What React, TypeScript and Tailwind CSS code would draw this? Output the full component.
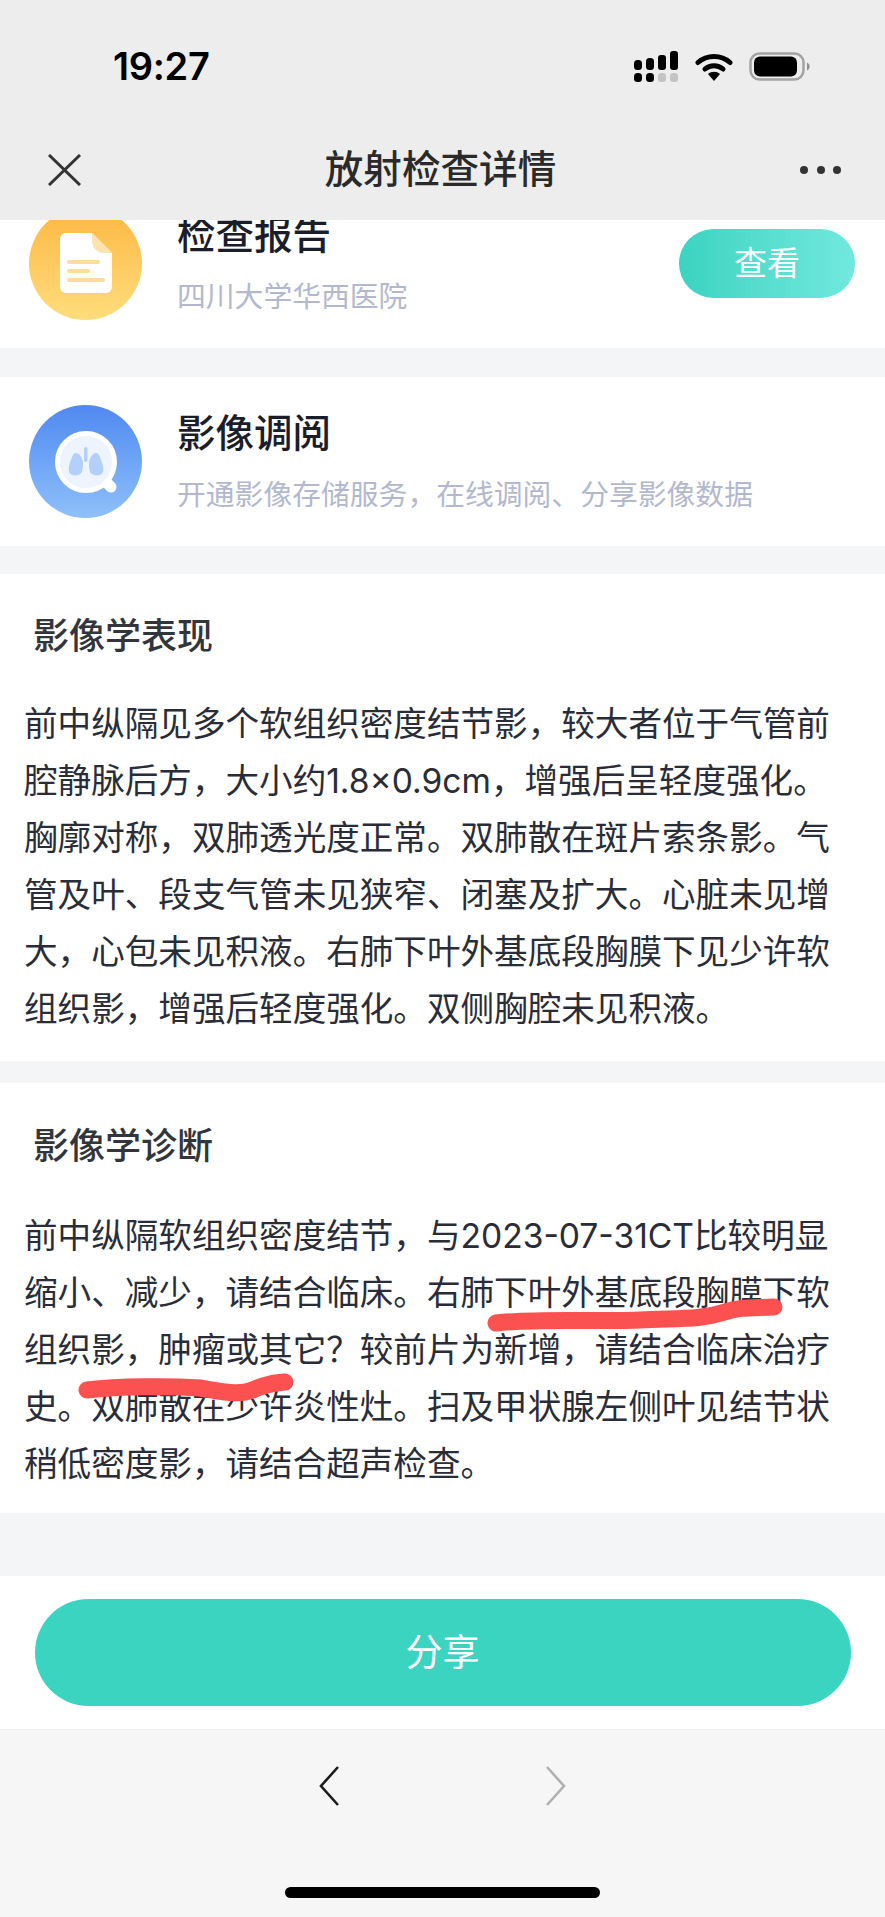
const findings = [
  '前中纵隔见多个软组织密度结节影，较大者位于气管前',
  '腔静脉后方，大小约1.8×0.9cm，增强后呈轻度强化。',
  '胸廓对称，双肺透光度正常。双肺散在斑片索条影。气',
  '管及叶、段支气管未见狭窄、闭塞及扩大。心脏未见增',
  '大，心包未见积液。右肺下叶外基底段胸膜下见少许软',
  '组织影，增强后轻度强化。双侧胸腔未见积液。',
];

const diagnosis = [
  '前中纵隔软组织密度结节，与2023-07-31CT比较明显',
  '缩小、减少，请结合临床。右肺下叶外基底段胸膜下软',
  '组织影，肿瘤或其它？较前片为新增，请结合临床治疗',
  '史。双肺散在少许炎性灶。扫及甲状腺左侧叶见结节状',
  '稍低密度影，请结合超声检查。',
];

function SignalIcon() {
  return (
    <svg width="46" height="31" viewBox="0 0 46 31">
      <rect x="1" y="22" width="8" height="9" rx="3.5" fill="#000" />
      <rect x="13" y="22" width="8" height="9" rx="3.5" fill="#000" />
      <rect x="25" y="22" width="8" height="9" rx="3" fill="#c4c4c4" />
      <rect x="37" y="22" width="8" height="9" rx="3" fill="#c4c4c4" />
      <rect x="1" y="9" width="8" height="10" rx="3.5" fill="#000" />
      <rect x="13" y="7" width="8" height="12" rx="3.5" fill="#000" />
      <rect x="25" y="4" width="8" height="15" rx="3" fill="#000" />
      <rect x="37" y="0" width="8" height="19" rx="3" fill="#000" />
    </svg>
  );
}

function WifiIcon() {
  return (
    <svg width="38" height="29" viewBox="0 0 38 29">
      <path d="M3 10.5 C 12 2.5, 26 2.5, 35 10.5" fill="none" stroke="#000" strokeWidth="5" strokeLinecap="round" />
      <path d="M10 17 C 15 12.5, 23 12.5, 28 17" fill="none" stroke="#000" strokeWidth="5" strokeLinecap="round" />
      <path d="M13 22 C 16.5 19, 21.5 19, 25 22 L19 29 Z" fill="#000" />
    </svg>
  );
}

function BatteryIcon() {
  return (
    <svg width="62" height="29" viewBox="0 0 62 29">
      <rect x="1.5" y="1.5" width="53" height="26" rx="9" fill="none" stroke="#a3a3a3" strokeWidth="2.5" />
      <rect x="5" y="4.5" width="43" height="20" rx="6" fill="#000" />
      <path d="M58 10.5 C 61.5 12, 61.5 17, 58 18.5 Z" fill="#8f8f8f" />
    </svg>
  );
}

function CloseIcon() {
  return (
    <svg width="33" height="32" viewBox="0 0 33 32">
      <path d="M1 1 L32 31 M32 1 L1 31" fill="none" stroke="#333" strokeWidth="3" />
    </svg>
  );
}

function DocIcon() {
  return (
    <svg width="113" height="113" viewBox="0 0 113 113">
      <path d="M31 32 a6 6 0 0 1 6 -6 h26 l20 20 v34 a6 6 0 0 1 -6 6 h-40 a6 6 0 0 1 -6 -6 Z" fill="#fff" />
      <path d="M63 26 l20 20 h-8 a12 12 0 0 1 -12 -12 Z" fill="#fde3ae" />
      <rect x="38" y="53" width="33" height="4" rx="2" fill="#fedc9c" />
      <rect x="38" y="62" width="23" height="4" rx="2" fill="#fedc9c" />
      <rect x="38" y="71" width="38" height="4" rx="2" fill="#fedc9c" />
    </svg>
  );
}

function LungIcon() {
  return (
    <svg width="113" height="113" viewBox="0 0 113 113">
      <path d="M78 78 L82 82" stroke="#fff" strokeWidth="11" strokeLinecap="round" />
      <circle cx="57" cy="57" r="28.5" fill="#edf4fe" stroke="#fff" strokeWidth="5" />
      <rect x="55" y="42" width="3.5" height="15" rx="1.7" fill="#b4cffa" />
      <path d="M54 57 C 53 50, 47 45, 44 50 C 41 56, 39 63, 40 67 C 42 72, 51 71, 53 67 C 54 64, 54 60, 54 57 Z" fill="#b4cffa" />
      <path d="M60 57 C 61 50, 67 45, 70 50 C 73 56, 75 63, 74 67 C 72 72, 63 71, 61 67 C 60 64, 60 60, 60 57 Z" fill="#b4cffa" />
    </svg>
  );
}

function ServiceRow({ icon, gradient, title, sub, action }: { icon: React.ReactNode; gradient: string; title: string; sub: string; action?: boolean }) {
  return (
    <div className="flex h-[169px] items-start pl-[29px] pr-[30px] pt-[28px]">
      <div className={`h-[113px] w-[113px] shrink-0 rounded-full ${gradient}`}>{icon}</div>
      <div className="ml-[35px] flex-1">
        <div className="text-[38.5px] leading-[56px] font-medium text-[#1b1d2a]">{title}</div>
        <div className="mt-[6px] text-[28.8px] leading-[56px] text-[#b3b8ce]">{sub}</div>
      </div>
      {action && (
        <button className="mt-[22px] flex h-[69px] w-[176px] items-center justify-center rounded-full bg-gradient-to-r from-[#3bd3c0] to-[#70e9de] text-[33px] text-white">
          查看
        </button>
      )}
    </div>
  );
}

function TextSection({ title, lines, className, bodyGap }: { title: string; lines: string[]; className: string; bodyGap: string }) {
  return (
    <section className={`bg-white pl-[24px] ${className}`}>
      <h2 className="pl-[9px] text-[36px] leading-[50px] font-medium text-[#33353d]">{title}</h2>
      <div className={`text-[33.6px] leading-[57px] text-[#2a2d38] ${bodyGap}`}>
        {lines.map((line) => (
          <p key={line} className="whitespace-nowrap">{line}</p>
        ))}
      </div>
    </section>
  );
}

export default function App() {
  return (
    <div
      className="relative flex h-[1917px] w-[885px] flex-col overflow-hidden bg-[#f4f5f7]"
      style={{ fontFamily: 'Inter, "Noto Sans CJK SC", sans-serif' }}
    >
      {/* Status bar + nav */}
      <header className="h-[220px] shrink-0 bg-[#ededed]">
        <div className="flex h-[132px] items-start pl-[113px] pr-[74px] pt-[50px]">
          <span className="text-[38px] leading-[32px] font-semibold tracking-[-0.3px] text-black">19:27</span>
          <div className="ml-auto flex items-center gap-[16px] pt-[1px]">
            <SignalIcon />
            <WifiIcon />
            <BatteryIcon />
          </div>
        </div>
        <div className="flex h-[76px] items-center justify-between pl-[48px] pr-[44px]">
          <CloseIcon />
          <h1 className="text-[38.6px] font-medium text-[#2a2a2a]">放射检查详情</h1>
          <div className="flex w-[41px] justify-between">
            <span className="h-[8px] w-[8px] rounded-full bg-[#333]" />
            <span className="h-[8px] w-[8px] rounded-full bg-[#333]" />
            <span className="h-[8px] w-[8px] rounded-full bg-[#333]" />
          </div>
        </div>
      </header>

      {/* Report card, scrolled under the nav */}
      <div className="h-[128px] shrink-0 overflow-hidden bg-white">
        <div className="-mt-[41px]">
          <ServiceRow
            icon={<DocIcon />}
            gradient="bg-gradient-to-b from-[#fdb740] to-[#fedd7c]"
            title="检查报告"
            sub="四川大学华西医院"
            action
          />
        </div>
      </div>

      <div className="mt-[29px] shrink-0 bg-white">
        <ServiceRow
          icon={<LungIcon />}
          gradient="bg-gradient-to-b from-[#5089f0] to-[#8fc0fa]"
          title="影像调阅"
          sub="开通影像存储服务，在线调阅、分享影像数据"
        />
      </div>

      <TextSection title="影像学表现" lines={findings} bodyGap="mt-[34px]" className="mt-[28px] h-[487px] pt-[37px]" />
      <TextSection title="影像学诊断" lines={diagnosis} bodyGap="mt-[36px]" className="mt-[22px] h-[430px] pt-[38px]" />

      <div className="mt-[63px] flex h-[153px] shrink-0 items-center justify-center bg-white">
        <button className="flex h-[107px] w-[816px] items-center justify-center rounded-full bg-[#3bd4c1] text-[37px] text-white">
          分享
        </button>
      </div>

      {/* Bottom browser toolbar */}
      <footer className="flex flex-1 flex-col items-center border-t border-[#f0f0f0] bg-[#f6f6f7]">
        <div className="mt-[36px] flex w-[247px] justify-between">
          <svg width="20" height="40" viewBox="0 0 20 40">
            <path d="M19 1 L2 20 L19 39" fill="none" stroke="#1c1c1c" strokeWidth="2.6" />
          </svg>
          <svg width="20" height="40" viewBox="0 0 20 40">
            <path d="M1 1 L18 20 L1 39" fill="none" stroke="#b0b0b0" strokeWidth="2.6" />
          </svg>
        </div>
        <div className="mt-[81px] h-[11px] w-[315px] rounded-full bg-black" />
      </footer>

      {/* Hand-drawn red underlines */}
      <svg className="pointer-events-none absolute top-0 left-0" width="885" height="1917" viewBox="0 0 885 1917">
        <path
          d="M496 1323 C 540 1318, 600 1322, 640 1320 C 680 1318, 700 1320, 725 1312 C 740 1307, 750 1308, 774 1307"
          fill="none"
          stroke="#fb5150"
          strokeWidth="17"
          strokeLinecap="round"
        />
        <path
          d="M87 1390 C 120 1386, 170 1386, 200 1388 C 225 1392, 240 1396, 255 1389 C 265 1384, 275 1383, 285 1382"
          fill="none"
          stroke="#fb5150"
          strokeWidth="17"
          strokeLinecap="round"
        />
      </svg>
    </div>
  );
}
